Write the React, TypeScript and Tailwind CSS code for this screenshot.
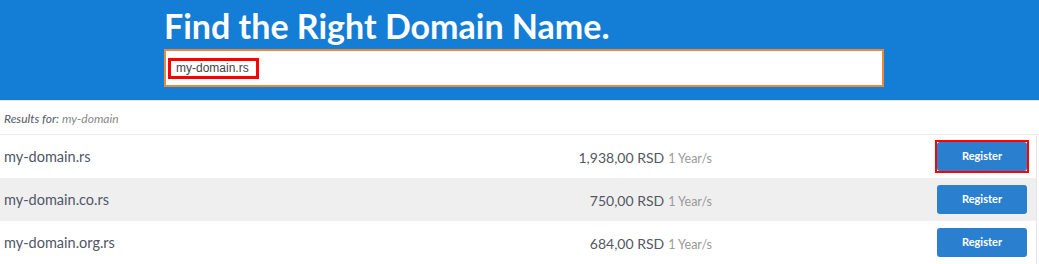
const rows = [
  { name: 'my-domain.rs', price: '1,938,00 RSD', highlight: true },
  { name: 'my-domain.co.rs', price: '750,00 RSD', highlight: false },
  { name: 'my-domain.org.rs', price: '684,00 RSD', highlight: false },
];

export default function App() {
  return (
    <div className="w-[1039px] h-[264px] overflow-hidden bg-white font-['Lato',sans-serif]">
      <header className="h-[101px] bg-[#147ed6] pl-[164px] pt-[6px] border-b border-[#e6e6e6]">
        <h1 className="text-[34px] leading-[40px] text-white font-bold">
          Find the Right Domain Name.
        </h1>
        <div className="mt-[3px] w-[720px] h-[38px] bg-white border-2 border-[#e9893a] flex items-center pl-[2px]">
          <span className="border-[3px] border-[#f00] pl-[5px] w-[91px] h-[21px] flex items-center text-[12px] text-[#444] font-['Liberation_Sans',sans-serif]">
            my-domain.rs
          </span>
        </div>
      </header>

      <div className="h-[34px] flex items-center pl-[4px] pt-[2px] border-b border-[#ececec] text-[12px] italic">
        <span className="text-[#555a66]">Results for:</span>
        <span className="ml-[3px] text-[#888]">my-domain</span>
      </div>

      <div className="w-[1037px] border-r border-[#e6e6e6]">
        {rows.map((r, i) => (
          <div
            key={r.name}
            className={`h-[43px] flex items-center pl-[4px] ${i === 1 ? 'bg-[#efefef]' : 'bg-white'}`}
          >
            <div className="flex-1 text-[14.5px] text-[#4f5668] pt-[1px]">{r.name}</div>
            <div className="w-[400px] text-right pt-[1px]">
              <span className="text-[14px] text-[#535763]">{r.price}</span>
              <span className="ml-[4px] text-[12.5px] text-[#999]">1 Year/s</span>
            </div>
            <div className="w-[324px] flex justify-end pr-[7px]">
              <div className={r.highlight ? 'border-2 border-[#f00]' : 'border-2 border-transparent'}>
                <button className="w-[90px] h-[29px] bg-[#2a7fcf] rounded-[3px] text-white text-[11px] font-bold">
                  Register
                </button>
              </div>
            </div>
          </div>
        ))}
      </div>
    </div>
  );
}
